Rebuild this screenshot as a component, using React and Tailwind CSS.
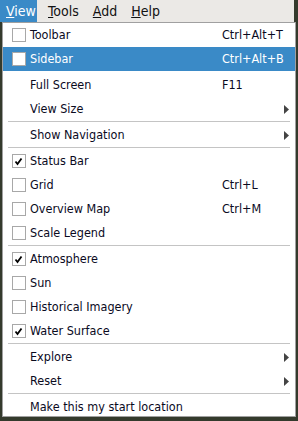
import React from 'react';

const font = { fontFamily: '"DejaVu Sans Condensed", "DejaVu Sans", Tahoma, sans-serif' };

function Check() {
  return (
    <svg width="9" height="9" viewBox="0 0 9 9" className="block">
      <path d="M1.5 4.5 L3.5 7 L7.5 1.5" fill="none" stroke="#000" strokeWidth="1.8" />
    </svg>
  );
}

function Arrow() {
  return (
    <svg width="5" height="9" viewBox="0 0 5 9" className="block">
      <path d="M0 0 L5 4.5 L0 9 Z" fill="#444" />
    </svg>
  );
}

function Item({ label, shortcut, check, checked, active, submenu }) {
  return (
    <div
      className={`flex items-center h-[24px] ${active ? 'bg-[#3a8ac7] text-white' : 'text-[#0a0a1e]'}`}
    >
      <div className="w-[26px] flex justify-center items-center shrink-0 pl-[5px]">
        {check && (
          <div className="w-[14px] h-[14px] bg-white border border-[#a8a8a8] flex items-center justify-center">
            {checked && <Check />}
          </div>
        )}
      </div>
      <span className="ml-[1px] flex-1">{label}</span>
      {shortcut && <span className="w-[73px] shrink-0">{shortcut}</span>}
      {submenu && (
        <span className="w-[11px] shrink-0 flex">
          <Arrow />
        </span>
      )}
    </div>
  );
}

function Sep() {
  return (
    <div className="h-[2px] px-[5px]">
      <div className="h-px bg-[#c4c4c4]" />
    </div>
  );
}

export default function App() {
  return (
    <div className="w-[298px] h-[421px] bg-[#343a2c] overflow-hidden text-[12.5px]" style={font}>
      <div className="h-[22px] w-[294px] bg-[#ebe9e6] flex items-center text-[#111] text-[14px]">
        <div className="h-full w-[37px] bg-[#3a8ac7] text-white flex items-center pl-[6px]">
          <span><u>V</u>iew</span>
        </div>
        <span className="ml-[11px]"><u>T</u>ools</span>
        <span className="ml-[14px]"><u>A</u>dd</span>
        <span className="ml-[14px]"><u>H</u>elp</span>
      </div>
      <div className="ml-[2px] w-[294px] h-[395px] bg-white border border-[#a0a0a0] overflow-hidden">
        <Item label="Toolbar" shortcut="Ctrl+Alt+T" check />
        <Item label="Sidebar" shortcut="Ctrl+Alt+B" check active />
        <div className="h-[2px]" />
        <Item label="Full Screen" shortcut="F11" />
        <Item label="View Size" submenu />
        <Sep />
        <Item label="Show Navigation" submenu />
        <Sep />
        <Item label="Status Bar" check checked />
        <Item label="Grid" shortcut="Ctrl+L" check />
        <Item label="Overview Map" shortcut="Ctrl+M" check />
        <Item label="Scale Legend" check />
        <Sep />
        <Item label="Atmosphere" check checked />
        <Item label="Sun" check />
        <Item label="Historical Imagery" check />
        <Item label="Water Surface" check checked />
        <Sep />
        <Item label="Explore" submenu />
        <Item label="Reset" submenu />
        <Sep />
        <Item label="Make this my start location" />
      </div>
    </div>
  );
}
